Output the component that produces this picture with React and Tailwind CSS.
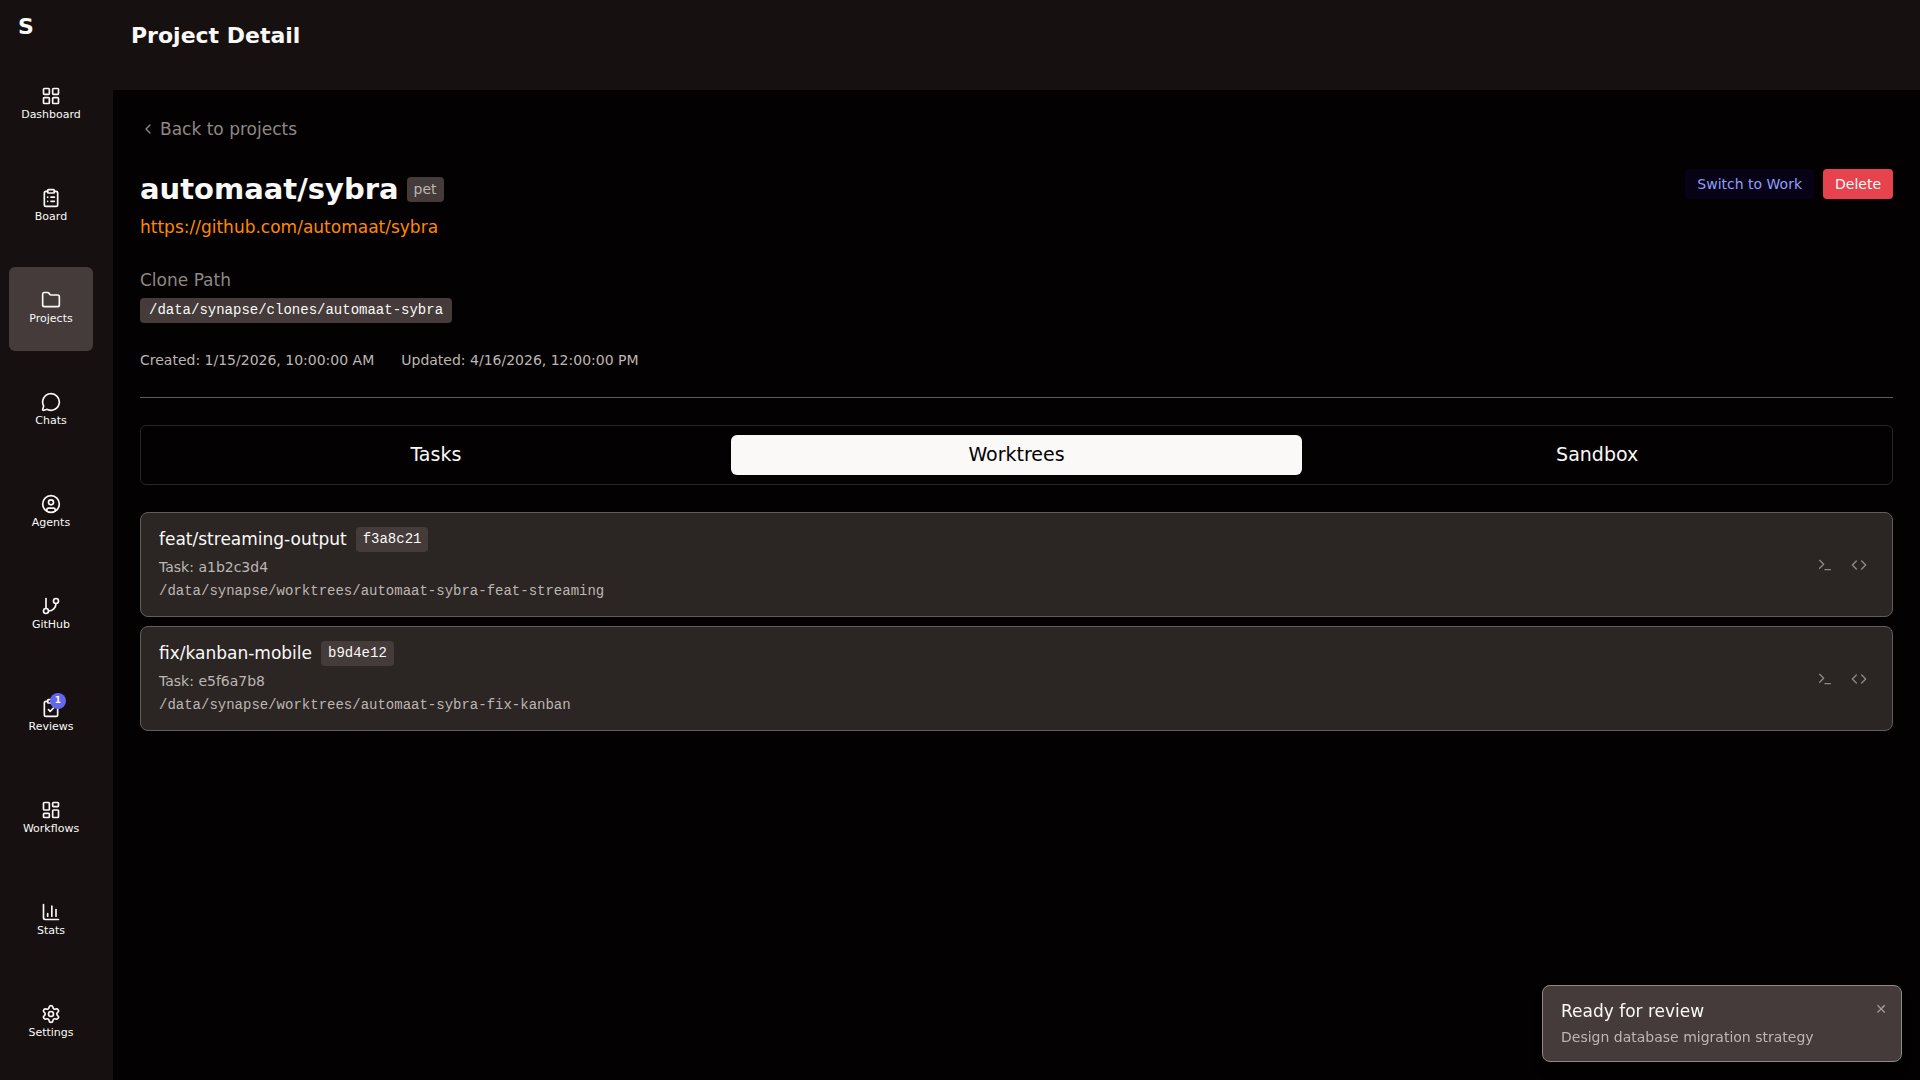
import React, { useState } from "react";
import {
  LayoutGrid,
  ClipboardList,
  Folder,
  MessageCircle,
  CircleUser,
  GitBranch,
  ClipboardCheck,
  LayoutDashboard,
  Settings,
  ChevronLeft,
  Terminal,
  Code,
} from "lucide-react";

const StatsIcon = () => (
  <svg
    width="20"
    height="20"
    viewBox="0 0 24 24"
    fill="none"
    stroke="currentColor"
    strokeWidth="2"
    strokeLinecap="round"
    strokeLinejoin="round"
    aria-hidden="true"
  >
    <path d="M3 3v16a2 2 0 0 0 2 2h16" />
    <path d="M18 17V9" />
    <path d="M13 17V5" />
    <path d="M8 17v-3" />
  </svg>
);

const navItems = [
  { label: "Dashboard", icon: LayoutGrid },
  { label: "Board", icon: ClipboardList },
  { label: "Projects", icon: Folder },
  { label: "Chats", icon: MessageCircle },
  { label: "Agents", icon: CircleUser },
  { label: "GitHub", icon: GitBranch },
  { label: "Reviews", icon: ClipboardCheck, badge: 1 },
  { label: "Workflows", icon: LayoutDashboard },
  { label: "Stats", icon: StatsIcon },
  { label: "Settings", icon: Settings },
];

const tabs = ["Tasks", "Worktrees", "Sandbox"];

const worktrees = [
  {
    branch: "feat/streaming-output",
    commit: "f3a8c21",
    task: "a1b2c3d4",
    path: "/data/synapse/worktrees/automaat-sybra-feat-streaming",
  },
  {
    branch: "fix/kanban-mobile",
    commit: "b9d4e12",
    task: "e5f6a7b8",
    path: "/data/synapse/worktrees/automaat-sybra-fix-kanban",
  },
];

const Sidebar = ({ active, onSelect }) => (
  <aside className="flex w-[113px] shrink-0 flex-col bg-[#161110] pl-[9px]">
    <div className="px-[9px] pt-3 text-[22px] leading-[30px] font-bold">S</div>
    <nav className="mt-[21px] flex flex-col gap-[18px]">
      {navItems.map(({ label, icon: Icon, badge }) => (
        <button
          key={label}
          type="button"
          onClick={() => onSelect(label)}
          className={`flex size-[84px] flex-col items-center justify-center rounded-md ${
            active === label ? "bg-[#443b3a]" : "hover:bg-[#2b2624]"
          }`}
        >
          <span className="relative">
            <Icon size={20} />
            {badge && (
              <span className="absolute -top-[5px] -right-[5px] flex size-4 items-center justify-center rounded-full bg-[#6366f1] text-[9px] font-bold">
                {badge}
              </span>
            )}
          </span>
          <span className="text-[11px] leading-[18px]">{label}</span>
        </button>
      ))}
    </nav>
  </aside>
);

const WorktreeCard = ({ worktree }) => (
  <li className="flex items-center justify-between rounded-lg border border-[#645c5a] bg-[#2b2624] px-[18px] py-[13px]">
    <div>
      <div className="flex items-center gap-[9px]">
        <span className="text-[17px] leading-[26px]">{worktree.branch}</span>
        <code className="rounded bg-[#443b3a] px-[7px] font-['Liberation_Mono',monospace] text-sm leading-[25px]">
          {worktree.commit}
        </code>
      </div>
      <p className="mt-[3px] text-sm leading-6 text-[#bdb6b3]">
        Task: {worktree.task}
      </p>
      <p className="font-['Liberation_Mono',monospace] text-sm leading-6 text-[#bdb6b3]">
        {worktree.path}
      </p>
    </div>
    <div className="flex gap-1 text-[#8f8885]">
      <button
        type="button"
        aria-label="Open terminal"
        className="rounded p-[7px] hover:bg-[#443b3a]"
      >
        <Terminal size={16} />
      </button>
      <button
        type="button"
        aria-label="Open in editor"
        className="rounded p-[7px] hover:bg-[#443b3a]"
      >
        <Code size={16} />
      </button>
    </div>
  </li>
);

const Toast = ({ onClose }) => (
  <div
    role="status"
    className="fixed right-[18px] bottom-[18px] flex w-[360px] items-start justify-between rounded-lg border border-[#8f8885] bg-[#443b3a] px-[18px] py-3 shadow-lg"
  >
    <div>
      <p className="text-[17px] leading-[27px]">Ready for review</p>
      <p className="text-sm leading-6 text-[#bdb6b3]">
        Design database migration strategy
      </p>
    </div>
    <button
      type="button"
      aria-label="Dismiss"
      onClick={onClose}
      className="-mr-1 text-sm leading-[22px] text-[#a39c99]"
    >
      ✕
    </button>
  </div>
);

const App = () => {
  const [activeNav, setActiveNav] = useState("Projects");
  const [activeTab, setActiveTab] = useState("Worktrees");
  const [showToast, setShowToast] = useState(true);

  return (
    <div className="flex min-h-screen bg-[#030102] font-['DejaVu_Sans',sans-serif] text-[#faf9f7]">
      <Sidebar active={activeNav} onSelect={setActiveNav} />

      <div className="flex min-w-0 flex-1 flex-col">
        <header className="h-[90px] bg-[#161110] px-[18px] pt-[21px]">
          <h2 className="text-[22px] leading-[30px] font-bold">
            Project Detail
          </h2>
        </header>

        <main className="flex-1 p-[27px]">
          <button
            type="button"
            className="flex items-center gap-1 text-[17px] leading-6 text-[#8f8885]"
          >
            <ChevronLeft size={16} />
            Back to projects
          </button>

          {/* Project heading */}
          <div className="mt-7 flex items-start justify-between">
            <div>
              <div className="flex items-center gap-2">
                <h1 className="text-[29px] leading-10 font-bold">
                  automaat/sybra
                </h1>
                <span className="rounded bg-[#443b3a] px-[7px] text-sm leading-[25px] text-[#bdb6b3]">
                  pet
                </span>
              </div>
              <a
                href="https://github.com/automaat/sybra"
                className="mt-1 block text-[17px] leading-7 text-[#ff8904]"
              >
                https://github.com/automaat/sybra
              </a>
            </div>
            <div className="flex gap-[9px]">
              <button
                type="button"
                className="rounded bg-[#080217] px-3 text-sm leading-[30px] text-[#8fa0f8]"
              >
                Switch to Work
              </button>
              <button
                type="button"
                className="rounded bg-[#e7434e] px-3 text-sm leading-[30px]"
              >
                Delete
              </button>
            </div>
          </div>

          {/* Clone path */}
          <div className="mt-[27px]">
            <p className="text-[17px] leading-6 text-[#8f8885]">Clone Path</p>
            <code className="mt-1.5 inline-block rounded bg-[#443b3a] px-[9px] font-['Liberation_Mono',monospace] text-sm leading-[25px]">
              /data/synapse/clones/automaat-sybra
            </code>
          </div>

          <div className="mt-[27px] flex gap-[27px] text-sm leading-5 text-[#bdb6b3]">
            <span>Created: 1/15/2026, 10:00:00 AM</span>
            <span>Updated: 4/16/2026, 12:00:00 PM</span>
          </div>

          <hr className="mt-[27px] border-[#645c5a]" />

          {/* Tabs */}
          <div
            role="tablist"
            className="mt-[27px] grid grid-cols-3 gap-[9px] rounded-md border border-[#2b2624] p-[9px]"
          >
            {tabs.map((tab) => (
              <button
                key={tab}
                type="button"
                role="tab"
                aria-selected={activeTab === tab}
                onClick={() => setActiveTab(tab)}
                className={`rounded-md pb-0.5 text-[19px] leading-[38px] ${
                  activeTab === tab ? "bg-[#faf9f7] text-[#030102]" : ""
                }`}
              >
                {tab}
              </button>
            ))}
          </div>

          <ul className="mt-[27px] flex flex-col gap-[9px]">
            {worktrees.map((worktree) => (
              <WorktreeCard key={worktree.commit} worktree={worktree} />
            ))}
          </ul>
        </main>
      </div>

      {showToast && <Toast onClose={() => setShowToast(false)} />}
    </div>
  );
};

export default App;
